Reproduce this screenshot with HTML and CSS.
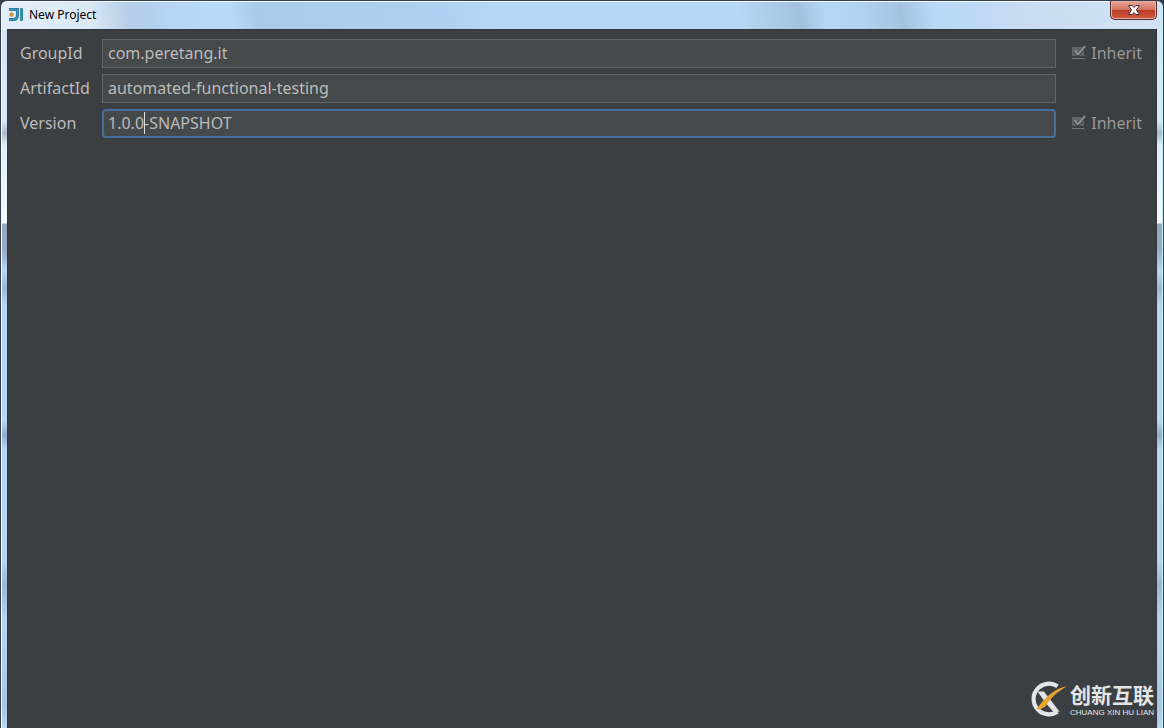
FILE: index.html
```
<!DOCTYPE html>
<html lang="en">
<head>
  <meta charset="UTF-8">
  <title>New Project</title>
  <link rel="stylesheet" href="styles.css">
</head>
<body>
  <div class="window">
    <header class="titlebar">
      <svg class="app-icon" viewBox="0 0 16 16" aria-hidden="true">
        <path d="M1 1h10v7c0 4-2 6-6 6H1v-3h4c2 0 3-1 3-3V4H1z" fill="#2b7fa3"/>
        <path d="M1 2.500h8.500v6c0 2.500-1.500 4-4 4H1" fill="none" stroke="#5ba3bd" stroke-width=".6"/>
        <circle cx="3.500" cy="7.500" r="2.300" fill="#c69a55"/>
        <rect x="12" y="1" width="3" height="13" rx="1" fill="#2b7fa3"/>
        <path d="M13 2v11" stroke="#62a8c2" stroke-width=".7"/>
      </svg>
      <h1 class="title">New Project</h1>
      <button class="close" type="button" aria-label="Close">
        <svg viewBox="0 0 14 12" width="14" height="12" aria-hidden="true">
          <path d="M1.500 1.500h3.500l2 2 2-2h3.500L9.500 6l3 4.500H9l-2-2-2 2H1.500L4.500 6z" fill="#fff" stroke="#4d3037" stroke-width="1"/>
        </svg>
      </button>
    </header>

    <main class="client">
      <form class="form">
        <label for="groupId">GroupId</label>
        <input class="field" type="text" id="groupId" value="com.peretang.it">
        <label class="inherit"><input type="checkbox" checked disabled>Inherit</label>

        <label for="artifactId">ArtifactId</label>
        <input class="field" type="text" id="artifactId" value="automated-functional-testing">
        <span></span>

        <label for="version">Version</label>
        <div class="field-wrap">
          <input class="field active" type="text" id="version" value="1.0.0-SNAPSHOT">
          <span class="caret"></span>
        </div>
        <label class="inherit"><input type="checkbox" checked disabled>Inherit</label>
      </form>

      <div class="brand">
        <svg class="brand-logo" viewBox="0 0 36 36" aria-hidden="true">
          <path d="M27 6A14.500 14.500 0 1 0 27 30" fill="none" stroke="#e4e5e6" stroke-width="4"/>
          <path d="M8 11h6l5 6 10 13h-6l-7-8z" fill="#e4e5e6"/>
          <path d="M36 6C25 8 16 15 7 28c5 0 8-2 10-5C21 17 27 11 36 6z" fill="#e5a52c"/>
        </svg>
        <div>
          <div class="brand-name" lang="zh">创新互联</div>
          <div class="brand-sub">CHUANG XIN HU LIAN</div>
        </div>
      </div>
    </main>
  </div>
</body>
</html>
```
FILE: styles.css
```
* { box-sizing: border-box; }
body { margin: 0; background: #34404f; font-family: "Noto Sans", "Open Sans", sans-serif; }

/* glass frame */
.window {
  display: flex;
  flex-direction: column;
  min-height: 100vh;
  padding: 0 6px;
  border: solid #34404f;
  border-width: 1px 1px 0;
  border-radius: 7px 7px 0 0;
  box-shadow: inset 1px 1px 0 #f4faff, inset -1px 0 0 #c8f4fc;
  background:
    linear-gradient(80deg, #e2effa 0, #dbe9f6 90px, #b9d0e9 125px, #b5cfed 145px, #b7d6f7 175px, #b8daf9 230px, #a9cbea 255px, #b0d2f2 440px, #b6d7f5 490px, #b6d7f5 730px, #a4c2df 790px, #b5d6f7 815px, #b2d2f1 850px, #a5c3e1 890px, #b8d8f7 920px, #c9dcf1 1020px, #d3e4f7 1164px) top / 100% 29px no-repeat,
    linear-gradient(#d3e5f5 29px, #d8e9f6 120px, #aabacb 132px, #e1eef8 144px, #f5fafd 222px, #94a9c2 223px, #97acc7 250px, #bad6f6 270px, #9eb6d8 287px, #b6d6f8 305px, #b6d7f8 420px, #91acd0 434px, #b6d7f8 448px, #b6d5f5 560px, #9eb6d8 583px, #b6d5f6 620px, #a9c5e7 705px, #b7d7f8 728px);
}

.titlebar {
  display: flex;
  align-items: center;
  height: 28px;
  color: #000;
}
.app-icon { width: 16px; height: 16px; margin-left: 1px; }
.title { margin: 0 auto 0 5px; padding-bottom: 2px; font-size: 12px; font-weight: 400; }
.close {
  display: flex;
  align-items: center;
  justify-content: center;
  align-self: flex-start;
  width: 47px;
  height: 19px;
  padding: 0;
  border: 1px solid #542c34;
  border-top: 0;
  border-radius: 0 0 5px 5px;
  box-shadow: inset 0 0 0 1px #e9aba1;
  background: linear-gradient(#e7a799, #d37361 48%, #b93a27 50%, #d05b3e);
}

.client {
  display: flex;
  flex: 1;
  flex-direction: column;
  justify-content: space-between;
  border: 1px solid #32373a;
  border-bottom: 0;
  background: #3c3f41;
  color: #bbb;
  font-size: 16px;
}

.form {
  display: grid;
  grid-template-columns: 72px 1fr 76px;
  align-items: center;
  gap: 6px 10px;
  padding: 9px 14px 0 12px;
}
.form label { padding-bottom: 2px; }
.field {
  display: block;
  width: 100%;
  height: 29px;
  padding: 0 5px 2px;
  border: 1px solid #646464;
  background: #45494a;
  color: #bbb;
  font: inherit;
}
.field-wrap { position: relative; }
.field.active {
  padding: 0 4px 2px;
  border: 2px solid #466d9e;
  border-radius: 4px;
  outline: 0;
}
/* text cursor after "1.0.0" */
.caret { position: absolute; top: 3px; left: 42px; width: 1px; height: 22px; background: #ddd; }

.inherit {
  display: flex;
  align-items: center;
  gap: 5px;
  margin-left: 6px;
  color: #999;
}
.inherit input {
  appearance: none;
  width: 15px;
  height: 15px;
  margin: 0;
  background: url("data:image/svg+xml,%3Csvg xmlns='http://www.w3.org/2000/svg' viewBox='0 0 15 15'%3E%3Cpath d='M0 2h13v10H0z' fill='%23606263'/%3E%3Cpath d='M0 14.500h13' stroke='%23777'/%3E%3Cpath d='M3 6l3 5 8-10' fill='none' stroke='%2335383a' stroke-width='3'/%3E%3Cpath d='M3 5l3 5 8-9' fill='none' stroke='%23909090' stroke-width='2'/%3E%3C/svg%3E");
}

.brand {
  display: flex;
  align-items: center;
  align-self: flex-end;
  gap: 3px;
  padding: 0 2px 10px 0;
  color: #e4e5e6;
}
.brand-logo { width: 38px; height: 38px; }
.brand-name { font: 700 21px/26px "Noto Sans CJK SC", sans-serif; }
.brand-sub { padding-top: 2px; font: 8px/8px "Liberation Sans", sans-serif; }
```
